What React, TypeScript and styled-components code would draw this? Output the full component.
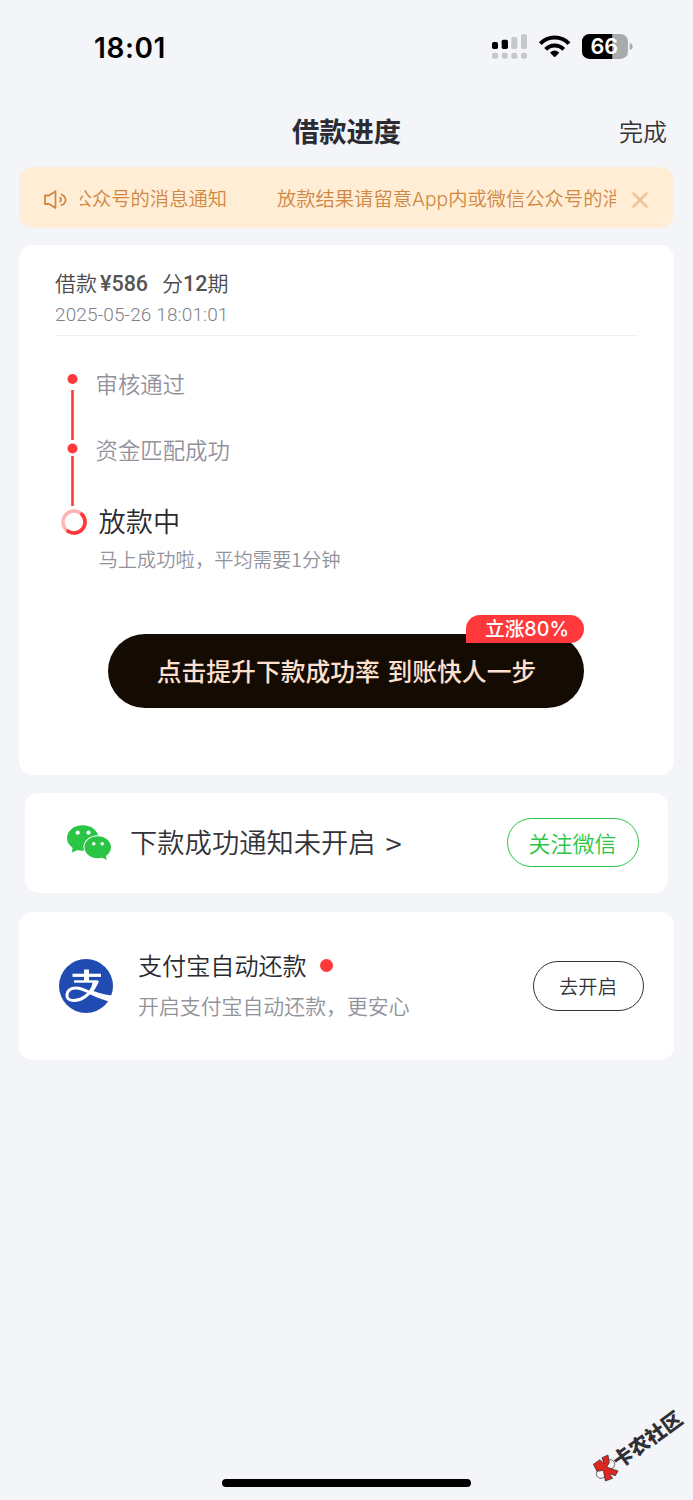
import React from "react";
import styled, { createGlobalStyle } from "styled-components";

const cjk = `"Noto Sans CJK SC", sans-serif`;

const GlobalStyle = createGlobalStyle`
  * { box-sizing: border-box; }
  body { margin: 0; background: #f3f5f9; font-family: ${cjk}; }
  button { font-family: inherit; padding: 0; background: none; border: 0; }
`;

const Screen = styled.div`
  position: relative;
  display: flex;
  flex-direction: column;
  width: 693px;
  height: 1500px;
  overflow: hidden;
  background: #f3f5f9;
`;

const StatusBar = styled.header`
  display: flex;
  justify-content: space-between;
  height: 96px;
  padding: 20px 23px 0 94px;
`;

const Clock = styled.time`
  font: 600 28px/56px Inter, sans-serif;
  letter-spacing: 0.6px;
  color: #000;
`;

const StatusIcons = styled.svg`
  width: 200px;
  height: 60px;
`;

const NavBar = styled.nav`
  display: grid;
  grid-template-columns: 1fr auto 1fr;
  align-items: center;
  height: 71px;
  padding: 0 26px;
`;

const Title = styled.h1`
  grid-column: 2;
  margin: -2px 0 0;
  font-size: 27.3px;
  font-weight: 700;
  line-height: 69px;
  color: #2b2b31;
`;

const DoneButton = styled.button`
  justify-self: end;
  margin-top: -3px;
  font-size: 24px;
  font-weight: 350;
  line-height: 69px;
  color: #333;
`;

const Notice = styled.section`
  display: flex;
  align-items: center;
  height: 61px;
  margin: 0 19px;
  padding: 0 25px;
  border-radius: 14px;
  background: #ffeed5;
`;

const SpeakerIcon = styled.svg`
  width: 24px;
  height: 20px;
  margin-top: 4px;
`;

const Marquee = styled.div`
  display: flex;
  justify-content: flex-end;
  gap: 50px;
  width: 536px;
  margin: 2px 0 0 12px;
  overflow: hidden;
  font-size: 19.3px;
  font-weight: 350;
  line-height: 60px;
  white-space: nowrap;
  color: #cf8743;
`;

const MarqueeHead = styled.span`
  display: flex;
  justify-content: flex-end;
  width: 147px;
  overflow: hidden;
`;

const MarqueeTail = styled.span`
  width: 339px;
  overflow: hidden;
`;

const Latin = styled.span`
  font-family: Inter, sans-serif;
  font-size: 1em;
`;

const CloseIcon = styled.svg`
  width: 16px;
  height: 16px;
  margin: 4px 0 0 16px;
`;

const ProgressCard = styled.section`
  height: 530px;
  margin: 17px 19px 0;
  padding: 21px 36px 0;
  border-radius: 14px;
  background: #fff;
`;

const LoanHead = styled.div`
  height: 70px;
  border-bottom: 1px solid #f0f0f2;
`;

const LoanTitle = styled.div`
  display: flex;
  font-size: 21px;
  font-weight: 350;
  line-height: 32px;
  color: #4c4c4c;
`;

const Figure = styled.b<{ $gap?: number }>`
  margin-left: ${(p) => p.$gap ?? 0}px;
  font: 500 21.5px/35px Roboto, sans-serif;
  color: #555;
`;

const Term = styled.span`
  display: flex;
  margin-left: 14px;
`;

const LoanDate = styled.div`
  margin-top: -1px;
  font: 300 19px/29px Roboto, sans-serif;
  letter-spacing: 0.13px;
  color: #80808a;
`;

const Timeline = styled.div`
  display: flex;
  height: 264px;
`;

const Track = styled.svg`
  width: 36px;
  height: 264px;
`;

const Steps = styled.div`
  display: flex;
  flex-direction: column;
  padding: 30px 0 0 4.500px;
`;

const Step = styled.div`
  height: 66px;
  font-size: 22.4px;
  font-weight: 350;
  line-height: 34px;
  color: #92929b;
`;

const CurrentStep = styled.div`
  margin: 1px 0 0 3px;
  font-size: 27.2px;
  font-weight: 350;
  line-height: 42px;
  color: #2a2a30;
`;

const StepHint = styled.p`
  margin: 2px 0 0 3px;
  font-size: 19.3px;
  font-weight: 350;
  line-height: 32px;
  color: #92929b;
`;

const BoostButton = styled.button`
  position: relative;
  display: block;
  width: 476px;
  height: 74px;
  margin: 34px 0 0 53px;
  padding-left: 1px;
  border-radius: 37px;
  background: #140b02;
  font-size: 24.8px;
  font-weight: 450;
  line-height: 69px;
  word-spacing: 2px;
  color: #fde0d0;
`;

const BoostLabel = styled.span`
  display: block;
  margin-top: -2px;
`;

const BoostBadge = styled.span`
  position: absolute;
  top: -19px;
  right: 0;
  width: 118px;
  height: 28px;
  padding-left: 4px;
  border-radius: 14px 14px 14px 0;
  background: #ff383b;
  font-size: 19.7px;
  font-weight: 450;
  line-height: 25px;
  color: #fff;
`;

const WechatCard = styled.section`
  display: flex;
  align-items: center;
  height: 100px;
  margin: 18px 25px 0;
  padding: 0 29px 0 42px;
  border-radius: 14px;
  background: #fff;
`;

const WechatIcon = styled.svg`
  width: 45px;
  height: 36px;
  margin-top: -1px;
`;

const WechatText = styled.div`
  flex: 1;
  margin: -4px 0 0 18px;
  font-size: 27.3px;
  font-weight: 350;
  white-space: pre;
  color: #333338;
`;

const Chevron = styled.span`
  display: inline-block;
  margin-left: 4px;
  transform: translateY(1px) scale(1.08);
`;

const PillButton = styled.button<{ $color: string; $w: number; $h: number; $size: number; $lift?: number }>`
  width: ${(p) => p.$w}px;
  height: ${(p) => p.$h}px;
  margin-top: ${(p) => -(p.$lift ?? 0)}px;
  padding-right: 1px;
  border: 1px solid ${(p) => p.$color};
  border-radius: 25px;
  font-size: ${(p) => p.$size}px;
  font-weight: 350;
  line-height: ${(p) => p.$h - 5}px;
  color: ${(p) => p.$color};
`;

const AlipayCard = styled.section`
  display: flex;
  align-items: center;
  height: 148px;
  margin: 19px 19px 0;
  padding: 0 30px 0 40px;
  border-radius: 14px;
  background: #fff;
`;

const AlipayIcon = styled.svg`
  width: 54px;
  height: 54px;
`;

const AlipayCopy = styled.div`
  flex: 1;
  margin: -1px 0 0 25px;
`;

const AlipayTitle = styled.div`
  display: flex;
  align-items: center;
  font-size: 24.1px;
  font-weight: 350;
  line-height: 40px;
  color: #2a2a30;
`;

const RedDot = styled.i`
  width: 13px;
  height: 13px;
  margin: 0 0 0 13px;
  border-radius: 50%;
  background: #ff383b;
`;

const AlipayHint = styled.div`
  font-size: 20.9px;
  font-weight: 350;
  line-height: 41px;
  color: #92929b;
`;

const Watermark = styled.div`
  position: absolute;
  left: 580px;
  top: 1395px;
  width: 113px;
  height: 105px;
`;

const WatermarkText = styled.span`
  position: absolute;
  left: 25px;
  top: 31px;
  width: 84px;
  font-size: 20px;
  font-weight: 900;
  line-height: 26px;
  text-align: center;
  white-space: nowrap;
  color: #303034;
  transform: rotate(-36deg);
`;

const HomeIndicator = styled.div`
  position: absolute;
  left: 222px;
  top: 1479px;
  width: 249px;
  height: 8px;
  border-radius: 4px;
  background: #000;
`;

export default function App() {
  return (
    <Screen>
      <GlobalStyle />
      <StatusBar>
        <Clock>18:01</Clock>
        <StatusIcons viewBox="0 0 600 180">
          <g fill="#000">
            <rect x="66" y="66" width="18" height="21" rx="5" />
            <rect x="95" y="59" width="19" height="28" rx="5" />
          </g>
          <g fill="#c6c7ca">
            <rect x="124" y="51" width="18" height="36" rx="5" />
            <rect x="153" y="43" width="18" height="44" rx="5" />
            {[66, 95, 124, 153].map((x) => (
              <rect key={x} x={x} y="98" width="18" height="18" rx="6" />
            ))}
          </g>
          <g fill="none" stroke="#000" strokeWidth="12">
            <path d="M211 71 A60 60 0 0 1 297 71" />
            <path d="M227 88 A37 37 0 0 1 281 88" />
          </g>
          <path d="M240 98 Q254 85 268 98 L256 110 Q254 112 252 110Z" />
          <path d="M427 42H452a22 22 0 0 1 22 22V95a22 22 0 0 1-22 22H427Z" fill="#a9aaac" />
          <path d="M427 42H358a22 22 0 0 0-22 22V95a22 22 0 0 0 22 22H427Z" />
          <path d="M479 69Q488 72 488 79.500Q488 87 479 90Z" fill="#a9aaac" />
          <text
            x="403"
            y="103"
            fill="#fff"
            fontFamily="Inter, sans-serif"
            fontWeight="600"
            fontSize="65"
            textAnchor="middle"
          >
            66
          </text>
        </StatusIcons>
      </StatusBar>

      <NavBar>
        <Title>借款进度</Title>
        <DoneButton>完成</DoneButton>
      </NavBar>

      <Notice>
        <SpeakerIcon viewBox="0 0 24 20" fill="none" stroke="#cf8743" strokeWidth="1.8" strokeLinejoin="round" strokeLinecap="round">
          <path d="M1 5.500H5L11.500 1.200V18L5 14H1Z" />
          <path d="M16 7.800Q18.300 9.700 16 11.600" />
          <path d="M17.500 4.500Q20 5.600 21 7.500Q22.500 10 21 12.400Q20 14.300 17.500 15.200" />
        </SpeakerIcon>
        <Marquee>
          <MarqueeHead>公众号的消息通知</MarqueeHead>
          <MarqueeTail>
            放款结果请留意<Latin>App</Latin>内或微信公众号的消息通知
          </MarqueeTail>
        </Marquee>
        <CloseIcon viewBox="0 0 16 16" stroke="#efc49b" strokeWidth="2.600" strokeLinecap="round">
          <path d="M1.500 1.500 14.500 14.500M14.500 1.500 1.500 14.500" />
        </CloseIcon>
      </Notice>

      <ProgressCard>
        <LoanHead>
          <LoanTitle>
            借款<Figure $gap={3}>¥586</Figure>
            <Term>
              分<Figure>12</Figure>期
            </Term>
          </LoanTitle>
          <LoanDate>2025-05-26 18:01:01</LoanDate>
        </LoanHead>
        <Timeline>
          <Track viewBox="0 0 36 264">
            <g fill="#ff383b">
              <circle cx="17.500" cy="43" r="5" />
              <rect x="16.200" y="54" width="2.600" height="50" />
              <circle cx="17.500" cy="112.500" r="5" />
              <rect x="16.200" y="120" width="2.600" height="50" />
            </g>
            <circle cx="19" cy="186" r="11" fill="none" stroke="#ffb4b4" strokeWidth="3.400" />
            <path d="M26.800 178.200A11 11 0 0 1 13 195.200" fill="none" stroke="#ff383b" strokeWidth="3.600" strokeLinecap="round" />
          </Track>
          <Steps>
            <Step>审核通过</Step>
            <Step>资金匹配成功</Step>
            <CurrentStep>放款中</CurrentStep>
            <StepHint>马上成功啦，平均需要1分钟</StepHint>
          </Steps>
        </Timeline>
        <BoostButton>
          <BoostLabel>点击提升下款成功率 到账快人一步</BoostLabel>
          <BoostBadge>
            立涨<Latin>80%</Latin>
          </BoostBadge>
        </BoostButton>
      </ProgressCard>

      <WechatCard>
        <WechatIcon viewBox="0 0 45 36">
          <g fill="#2bc545">
            <ellipse cx="15.700" cy="13" rx="15.700" ry="12.700" />
            <path d="M6 21 4.800 27.500 13 24Z" />
          </g>
          <ellipse cx="30.700" cy="22.300" rx="14.200" ry="12" fill="#fff" />
          <g fill="#2bc545">
            <ellipse cx="30.700" cy="22.300" rx="13.300" ry="11" />
            <path d="M34 32 39.700 35 38.500 29Z" />
          </g>
          <g fill="#fff">
            <circle cx="10.700" cy="7.700" r="2.100" />
            <circle cx="21.500" cy="7.700" r="2.100" />
            <circle cx="26.700" cy="18.700" r="1.700" />
            <circle cx="35.200" cy="18.700" r="1.700" />
          </g>
        </WechatIcon>
        <WechatText>
          下款成功通知未开启 <Chevron>&gt;</Chevron>
        </WechatText>
        <PillButton $color="#2bc545" $w={132} $h={49} $size={22} $lift={2}>
          关注微信
        </PillButton>
      </WechatCard>

      <AlipayCard>
        <AlipayIcon viewBox="0 0 54 54">
          <circle cx="27" cy="27" r="27" fill="#204bb1" />
          <g fill="none" stroke="#fff">
            <path d="M13.500 16.300H42" strokeWidth="3.200" />
            <path d="M15 22.500H39" strokeWidth="2.400" />
            <path d="M27.500 10.500V22.500" strokeWidth="5" />
            <path d="M37 22C33 34 24 41.500 14.500 41.500C9 41.500 7.500 38.500 8 35.500C8.700 31 12.500 29 17 29C22 29 27 31.500 32 34" strokeWidth="3" />
          </g>
          <path d="M34 22H40C38.500 26 36.500 29.500 34.500 32C40 34 46 35.500 53 36.500Q51.500 40 49.500 42.500C43 40.500 36 37.500 29 34.500Q33 28.500 34 22Z" fill="#fff" />
        </AlipayIcon>
        <AlipayCopy>
          <AlipayTitle>
            支付宝自动还款
            <RedDot />
          </AlipayTitle>
          <AlipayHint>开启支付宝自动还款，更安心</AlipayHint>
        </AlipayCopy>
        <PillButton $color="#333338" $w={111} $h={50} $size={19.3}>
          去开启
        </PillButton>
      </AlipayCard>

      <Watermark>
        <svg width="113" height="105" viewBox="0 0 339 315">
          <g fill="#f6f6f8" stroke="#222" strokeWidth="2">
            <circle cx="90" cy="208" r="14" />
            <circle cx="63" cy="236" r="14" />
          </g>
          <g fill="#de2721" stroke="#222" strokeWidth="2">
            <path d="M40 208 60 194 72 206 66 188 84 180 88 203 80 216 114 228 106 242 88 236 98 250 76 258 70 226 51 229Z" />
          </g>
        </svg>
        <WatermarkText>卡农社区</WatermarkText>
      </Watermark>
      <HomeIndicator />
    </Screen>
  );
}
